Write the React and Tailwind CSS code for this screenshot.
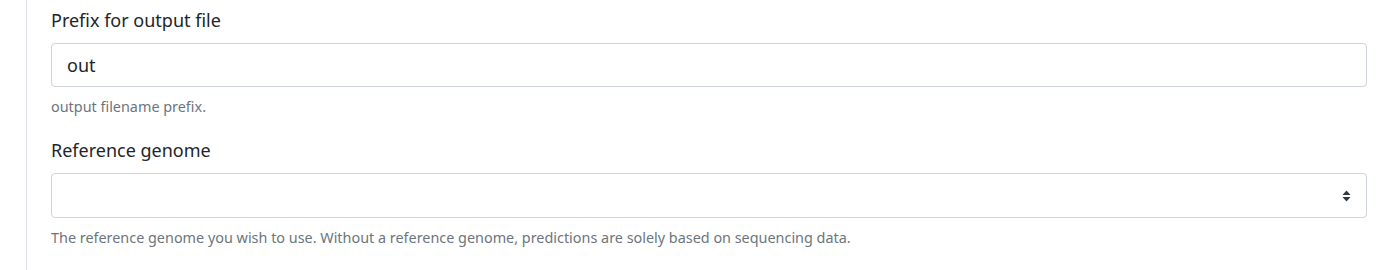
import React from "react";

const Field = ({ label, help, children }) => (
  <div className="mb-[19px]">
    <label className="block text-[18px] leading-[26px] text-[#212529] mb-[10px]">{label}</label>
    {children}
    <p className="mt-[9px] text-[14.4px] leading-[22px] text-[#6c757d]">{help}</p>
  </div>
);

export default function App() {
  return (
    <div className="w-[1387px] h-[270px] bg-white flex overflow-hidden" style={{ fontFamily: '"Noto Sans", "Open Sans", sans-serif' }}>
      <div className="w-[26px] shrink-0" />
      <div className="flex-1 border-l border-[#dee2e6] pl-6 pr-5 pt-[7px]">
        <Field label="Prefix for output file" help="output filename prefix.">
          <input
            defaultValue="out"
            className="w-full h-[44px] px-[15px] border border-[#ced4da] rounded-[4px] text-[18px] text-[#212529] outline-none"
            style={{ fontFamily: "inherit" }}
          />
        </Field>
        <Field
          label="Reference genome"
          help="The reference genome you wish to use. Without a reference genome, predictions are solely based on sequencing data."
        >
          <div className="relative w-full h-[45px] border border-[#ced4da] rounded-[4px] flex items-center justify-end pr-[15px]">
            <svg width="9" height="12" viewBox="0 0 9 12" className="text-[#343a40]">
              <path d="M4.5 0.5 L8.5 5 H0.5 Z" fill="currentColor" />
              <path d="M0.5 7 H8.5 L4.5 11.5 Z" fill="currentColor" />
            </svg>
          </div>
        </Field>
      </div>
    </div>
  );
}
